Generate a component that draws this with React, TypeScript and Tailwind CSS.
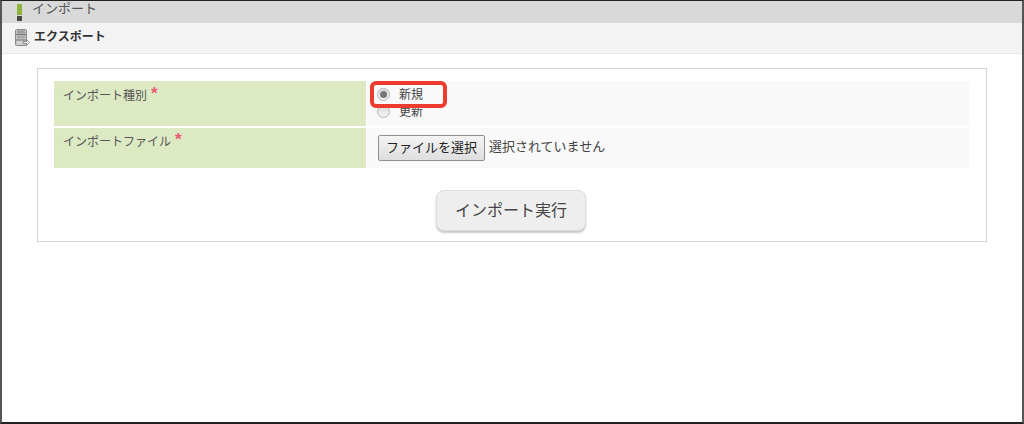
const font = "font-['Liberation_Sans','Noto_Sans_CJK_JP',sans-serif]"

function ExportIcon() {
  return (
    <svg width="15" height="18" viewBox="0 0 15 18" className="shrink-0">
      <rect x="0.5" y="0.5" width="11" height="16" rx="1" fill="#c4c7c7" stroke="#8a8a8a" />
      <path d="M1 5.5h10M1 11h10" stroke="#777" />
      <rect x="2" y="1.5" width="8" height="3" fill="#9a9a9a" />
      <rect x="2" y="6.5" width="8" height="3" fill="#a8a8a8" />
      <rect x="2" y="12" width="8" height="3.5" fill="#d4d4d4" />
      <path d="M8 12.5h3.5V10.5l3 3-3 3v-2H8z" fill="#f2f2f2" stroke="#777" strokeWidth="0.8" />
    </svg>
  )
}

function Radio({ checked }: { checked?: boolean }) {
  return (
    <span className="flex h-[13px] w-[13px] items-center justify-center rounded-full border border-[#b5b5b5] bg-gradient-to-b from-[#dcdcdc] to-[#f4f4f4]">
      {checked && <span className="h-[7px] w-[7px] rounded-full bg-[#777]" />}
    </span>
  )
}

function Required() {
  return <span className="relative top-[-1px] ml-[4px] text-[17px] leading-none font-bold text-[#ec5a78]">*</span>
}

export default function App() {
  return (
    <div className={`${font} relative h-[424px] w-[1024px] overflow-hidden border-t border-r-2 border-b-2 border-l-2 border-t-[#222] border-r-[#555] border-b-[#222] border-l-[#555] bg-white`}>
      <div className="flex h-[22px] items-center bg-[#d9d9d9] pl-[15px] text-[13px] text-[#555]">
        <span className="flex h-[17px] w-[5px] flex-col gap-px">
          <span className="h-[11px] bg-[#8db33a]" />
          <span className="h-[5px] bg-[#4a4a42]" />
        </span>
        <span className="ml-[10px] mb-[6px]">インポート</span>
      </div>
      <div className="flex h-[31px] items-center border-b border-[#e9e9e9] bg-[#f3f3f3] pl-[13px] text-[12px] font-bold text-[#333]">
        <ExportIcon />
        <span className="ml-[4px] mb-[2px]">エクスポート</span>
      </div>

      <div className="mx-[35px] mt-[14px] h-[174px] w-[950px] border border-[#d4d4d4] pt-[12px] pr-[17px] pl-[16px]">
        <div className="flex h-[45px] gap-px">
          <div className="w-[312px] bg-[#dce9c3] pt-[5px] pl-[9px] text-[12px] text-[#555]">
            インポート種別
            <Required />
          </div>
          <div className="flex flex-1 flex-col bg-[#f9f9f9] pt-[5px] pl-[10px] text-[12px] leading-[17px] text-[#444]">
            <label className="flex items-center gap-[9px]">
              <Radio checked />
              <span className="pt-[2px] leading-[15px]">新規</span>
            </label>
            <label className="flex items-center gap-[9px]">
              <Radio />
              <span className="pt-[2px] leading-[15px]">更新</span>
            </label>
          </div>
        </div>
        <div className="mt-[2px] flex h-[40px] gap-px">
          <div className="w-[312px] bg-[#dce9c3] pt-[4px] pl-[9px] text-[12px] text-[#555]">
            インポートファイル
            <Required />
          </div>
          <div className="flex flex-1 items-start bg-[#f9f9f9] pt-[7px] pl-[11px] text-[13px] text-[#444]">
            <button className="h-[26px] w-[107px] rounded-[2px] border border-[#8f8f8f] bg-gradient-to-b from-[#f4f4f4] to-[#dedede] text-[13px] text-[#222]">
              ファイルを選択
            </button>
            <span className="ml-[4px] leading-[24px]">選択されていません</span>
          </div>
        </div>
        <div className="mt-[22px] flex justify-center pr-[1px]">
          <button className="h-[41px] w-[150px] rounded-[8px] border border-[#dcdcdc] bg-[#eeeeee] text-[16px] text-[#444] shadow-[0_2px_2px_rgba(0,0,0,0.22)]">
            インポート実行
          </button>
        </div>
      </div>

      <div className="absolute top-[80px] left-[368px] h-[27px] w-[77px] rounded-[6px] border-[4px] border-[#ec3b2f]" />
    </div>
  )
}
